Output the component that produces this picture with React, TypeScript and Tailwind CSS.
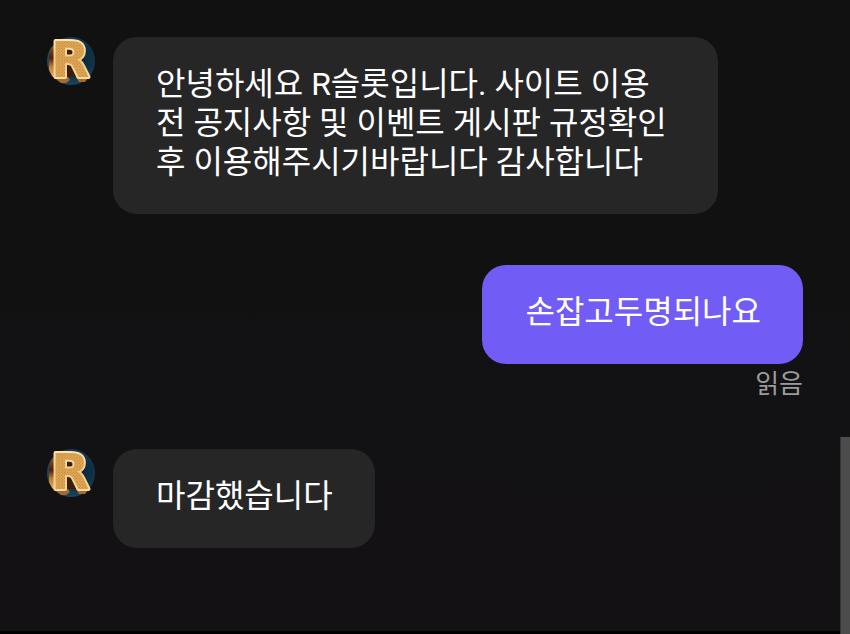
import { useId } from 'react'
import clsx from 'clsx'

interface Message {
  id: number
  from: 'agent' | 'me'
  text: string
  read?: boolean
}

const MESSAGES: Message[] = [
  {
    id: 1,
    from: 'agent',
    text: '안녕하세요 R슬롯입니다. 사이트 이용 전 공지사항 및 이벤트 게시판 규정확인 후 이용해주시기바랍니다 감사합니다',
  },
  { id: 2, from: 'me', text: '손잡고두명되나요', read: true },
  { id: 3, from: 'agent', text: '마감했습니다' },
]

function Avatar() {
  const id = useId()

  return (
    <svg viewBox="0 0 48 48" className="w-12 h-12 shrink-0 overflow-visible" role="img" aria-label="R슬롯">
      <defs>
        <radialGradient id={`${id}-bg`} cx="0.6" cy="0.45" r="0.6">
          <stop offset="0" stopColor="#0d2030" />
          <stop offset="0.6" stopColor="#0f3249" />
          <stop offset="1" stopColor="#1d4b65" />
        </radialGradient>
        <linearGradient id={`${id}-rim`} x1="0" y1="0" x2="0" y2="1">
          <stop offset="0" stopColor="#fff0c4" />
          <stop offset="0.5" stopColor="#f0c987" />
          <stop offset="1" stopColor="#ffe6ae" />
        </linearGradient>
        <linearGradient id={`${id}-side`} x1="0" y1="0" x2="0" y2="1">
          <stop offset="0" stopColor="#9a5a2c" />
          <stop offset="0.4" stopColor="#4a1f0c" />
          <stop offset="0.65" stopColor="#c47d33" />
          <stop offset="1" stopColor="#e8b25e" />
        </linearGradient>
        <pattern id={`${id}-face`} width="3" height="3" patternUnits="userSpaceOnUse">
          <rect width="3" height="3" fill="#dfa755" />
          <circle cx="0.8" cy="0.8" r="0.6" fill="#bd843c" />
          <circle cx="2.3" cy="2.3" r="0.6" fill="#bd843c" />
        </pattern>
      </defs>
      <circle cx="24" cy="24" r="24" fill={`url(#${id}-bg)`} />
      {/* depth of the letter, to the left and below */}
      <path d="M9 7l-5 4-2 6v16l3 6 4 3z" fill={`url(#${id}-side)`} />
      <path d="M7 40h14l2 3-4 3h-5zM29 40h13l-4 5h-6z" fill="#a8692b" />
      <path d="M20 13h12v9H20z" fill="#3a1d0c" />
      <path d="M20 28h7l5 12H20z" fill="#3a1d0c" />
      <text
        x="4"
        y="40"
        fontFamily="'DejaVu Sans', sans-serif"
        fontWeight="700"
        fontSize="50"
        fill={`url(#${id}-face)`}
        stroke={`url(#${id}-rim)`}
        strokeWidth="4"
        strokeLinejoin="round"
        paintOrder="stroke"
      >
        R
      </text>
    </svg>
  )
}

function ChatMessage({ message }: { message: Message }) {
  const mine = message.from === 'me'

  return (
    <li className={clsx('flex items-start', mine ? 'justify-end' : 'gap-[18px]')}>
      {!mine && <Avatar />}
      <div className={clsx('flex flex-col max-w-4/5', mine ? 'items-end' : 'items-start')}>
        <p
          className={clsx(
            'rounded-3xl pl-[43px] pr-[42px] pt-7 pb-8 text-[32px] leading-[39px] break-keep text-white',
            mine ? 'bg-[#715cf6]' : 'bg-[#262626]',
          )}
        >
          {message.text}
        </p>
        {message.read && <span className="mt-1.5 text-[26px] leading-7 text-[#9b9b9b]">읽음</span>}
      </div>
    </li>
  )
}

export default function App() {
  return (
    <div className="flex min-h-screen bg-linear-to-b from-[#111111] to-[#131114] font-[Roboto,'Noto_Sans_CJK_KR',sans-serif]">
      {/* Messages */}
      <main className="flex-1 min-w-0 pl-[47px] pr-[37px] pt-[37px] pb-10 border-b-3 border-black">
        <ul className="flex flex-col gap-[51px]">
          {MESSAGES.map((message) => (
            <ChatMessage key={message.id} message={message} />
          ))}
        </ul>
      </main>

      {/* Scrollbar */}
      <div className="flex flex-col justify-end w-2.5" aria-hidden="true">
        <div className="h-[31%] border-l border-[#353535] bg-[#4c4c4d]" />
      </div>
    </div>
  )
}
